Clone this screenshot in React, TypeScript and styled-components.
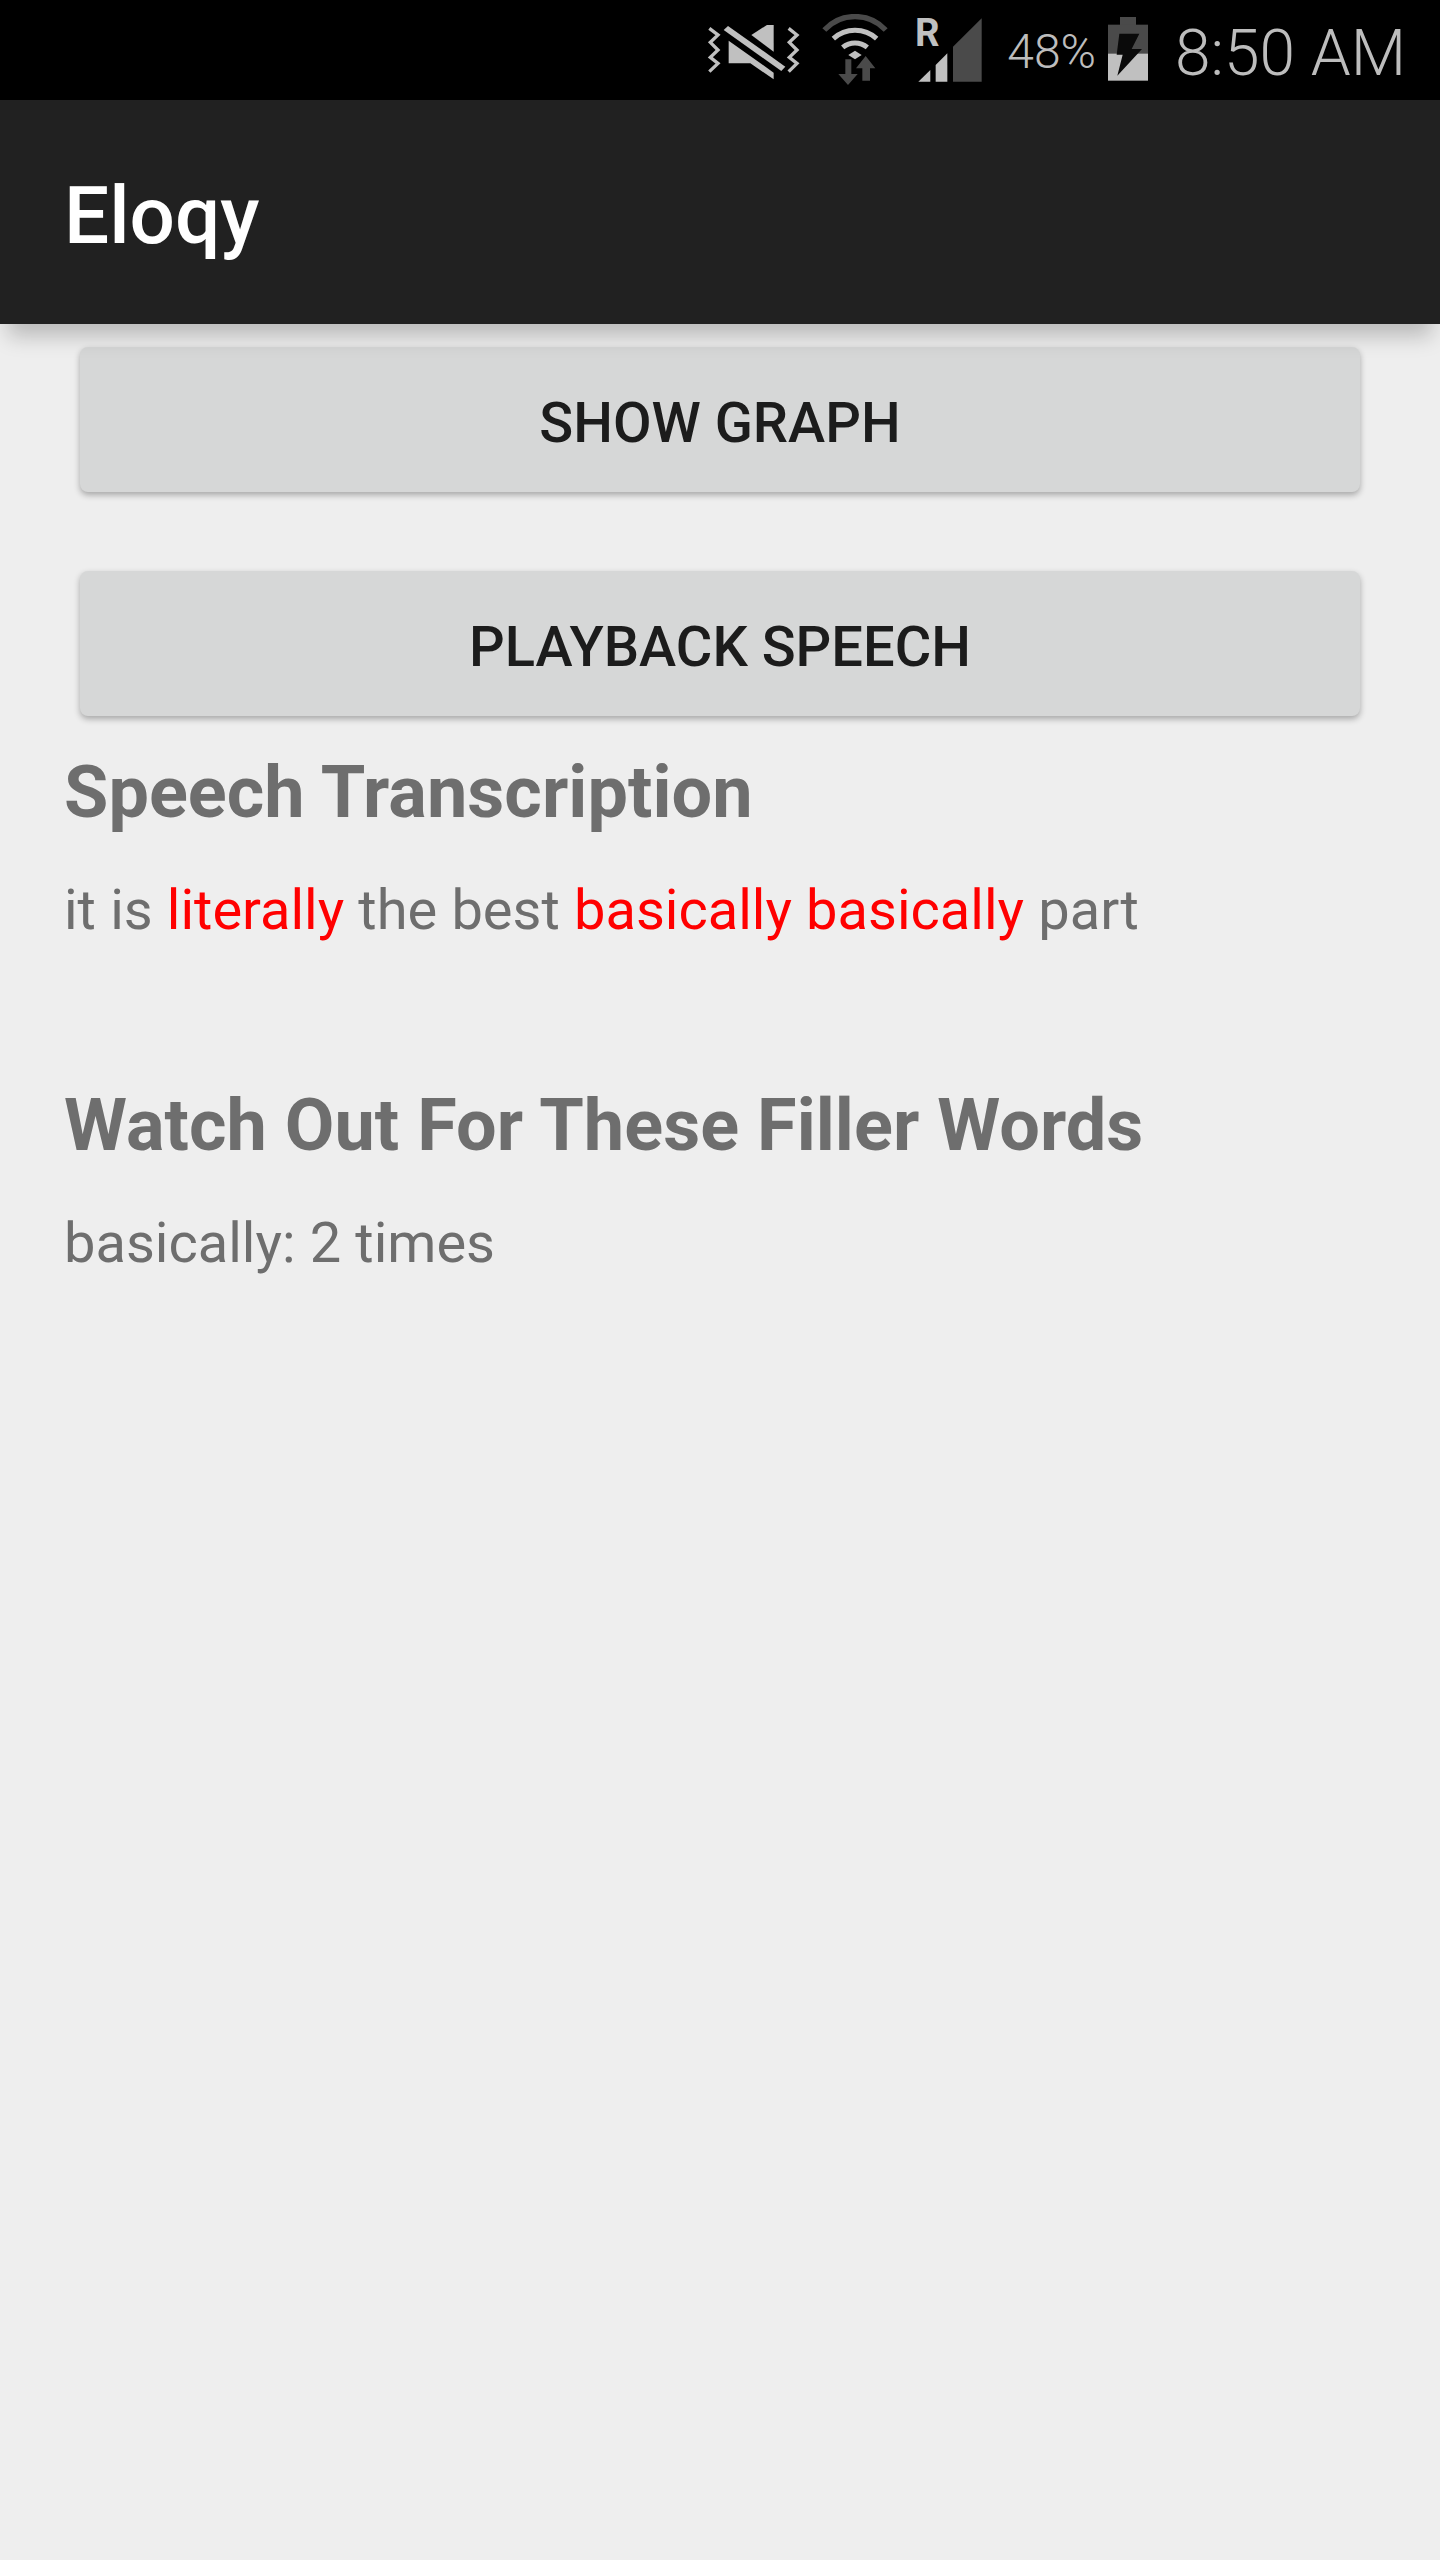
import React from "react";
import styled, { createGlobalStyle } from "styled-components";

const Global = createGlobalStyle`
  html, body { margin: 0; padding: 0; background: #eeeeee; }
  body { font-family: Roboto, "Liberation Sans", sans-serif; }
`;

const Screen = styled.div`
  width: 1440px;
  height: 2560px;
  overflow: hidden;
  background: #eeeeee;
  display: flex;
  flex-direction: column;
`;

const StatusBar = styled.div`
  height: 100px;
  flex: none;
  background: #000;
  display: flex;
  align-items: flex-start;
  justify-content: flex-end;
  color: #bdbdbd;
`;

const Glyph = styled.svg<{ $top: number; $right: number }>`
  display: block;
  flex: none;
  margin-top: ${(p) => p.$top}px;
  margin-right: ${(p) => p.$right}px;
`;

const Percent = styled.span`
  font-size: 48px;
  font-weight: 300;
  line-height: 54px;
  margin-top: 25px;
  margin-right: 12px;
`;

const Clock = styled.span`
  font-size: 64px;
  font-weight: 300;
  line-height: 76px;
  margin-top: 16px;
  margin-right: 34px;
`;

const AppBar = styled.header`
  height: 224px;
  box-sizing: border-box;
  flex: none;
  background: #212121;
  box-shadow: 0 20px 20px -8px rgba(0, 0, 0, 0.22);
  display: flex;
  align-items: center;
  padding: 8px 0 0 64px;
  position: relative;
  z-index: 1;
  color: #fff;
  font-size: 80px;
  font-weight: 500;
`;

const Content = styled.main`
  display: flex;
  flex-direction: column;
  padding: 23px 64px 0;
`;

const Button = styled.button`
  display: block;
  align-self: center;
  width: 1280px;
  height: 145px;
  flex: none;
  margin-bottom: 79px;
  padding: 6px 0 0;
  border: none;
  border-radius: 8px;
  background: #d6d7d7;
  box-shadow: 0 3px 6px rgba(0, 0, 0, 0.3);
  color: #1c1c1c;
  font-family: inherit;
  font-size: 56px;
  font-weight: 500;
`;

const PlayButton = styled(Button)`
  margin-bottom: 0;
`;

const Heading = styled.h2<{ $gap: number }>`
  margin: ${(p) => p.$gap}px 0 0;
  font-size: 72px;
  line-height: 84px;
  font-weight: 700;
  letter-spacing: 0.05px;
  color: #6e6e6e;
`;

const Body = styled.p`
  margin: 42px 0 0;
  font-size: 56px;
  line-height: 66px;
  word-spacing: 0.3px;
  color: #6e6e6e;
`;

const Filler = styled.span`
  color: #ff0000;
`;

const D = "#4a4a4a";
const L = "#c0c0c0";

export default function App() {
  return (
    <Screen>
      <Global />
      <StatusBar>
        <Glyph $top={25} $right={20} width={94} height={56} viewBox="55 75 282 168">
          <polygon points="188,105 255,62 255,155" fill={L} />
          <polygon points="120,122 255,218 255,238 185,190 120,190" fill={L} />
          <polygon points="118,78 290,200 278,213 105,90" fill={L} />
          <polyline points="62,85 88,105 65,127 88,150 65,172 88,190 62,215" fill="none" stroke={L} strokeWidth="10" />
          <polyline points="300,85 325,105 302,127 325,150 302,172 325,190 300,215" fill="none" stroke={L} strokeWidth="10" />
        </Glyph>
        <Glyph $top={14} $right={26} width={68} height={72} viewBox="393 42 204 216">
          <path d="M403,90 A125,125 0 0 1 587,90" fill="none" stroke={D} strokeWidth="16" />
          <path d="M430,116 A97,97 0 0 1 560,116" fill="none" stroke={L} strokeWidth="15" />
          <path d="M458,142 A58,58 0 0 1 532,142" fill="none" stroke={L} strokeWidth="15" />
          <polygon points="475,165 495,152 515,165 495,178" fill={L} />
          <polygon points="466,178 484,178 484,222 503,222 474,255 445,222 466,222" fill={D} />
          <polygon points="527,168 556,205 540,205 540,242 517,242 517,205 498,205" fill={D} />
        </Glyph>
        <Glyph $top={8} $right={24} width={68} height={74} viewBox="678 24 204 222">
          <polygon points="792,245 878,245 878,55 792,140" fill={D} />
          <polygon points="688,245 724,245 724,210" fill={L} />
          <polygon points="740,245 775,245 775,160 740,195" fill={L} />
          <text x="678" y="138" fill={L} fontFamily="Roboto, sans-serif" fontWeight="700" fontSize="115">R</text>
        </Glyph>
        <Percent>48%</Percent>
        <Glyph $top={17} $right={27} width={40} height={64} viewBox="144 52 120 192">
          <rect x="180" y="52" width="48" height="24" fill={D} />
          <rect x="144" y="75" width="120" height="88" fill={D} />
          <rect x="144" y="162" width="120" height="81" fill={L} />
          <polygon points="178,102 238,102 215,148 246,148 172,228 188,165 170,165" fill="#0a0a0a" />
        </Glyph>
        <Clock>8:50 AM</Clock>
      </StatusBar>
      <AppBar>Eloqy</AppBar>
      <Content>
        <Button>SHOW GRAPH</Button>
        <PlayButton>PLAYBACK SPEECH</PlayButton>
        <Heading $gap={35}>Speech Transcription</Heading>
        <Body>
          it is <Filler>literally</Filler> the best <Filler>basically basically</Filler> part
        </Body>
        <Heading $gap={141}>Watch Out For These Filler Words</Heading>
        <Body>basically: 2 times</Body>
      </Content>
    </Screen>
  );
}
